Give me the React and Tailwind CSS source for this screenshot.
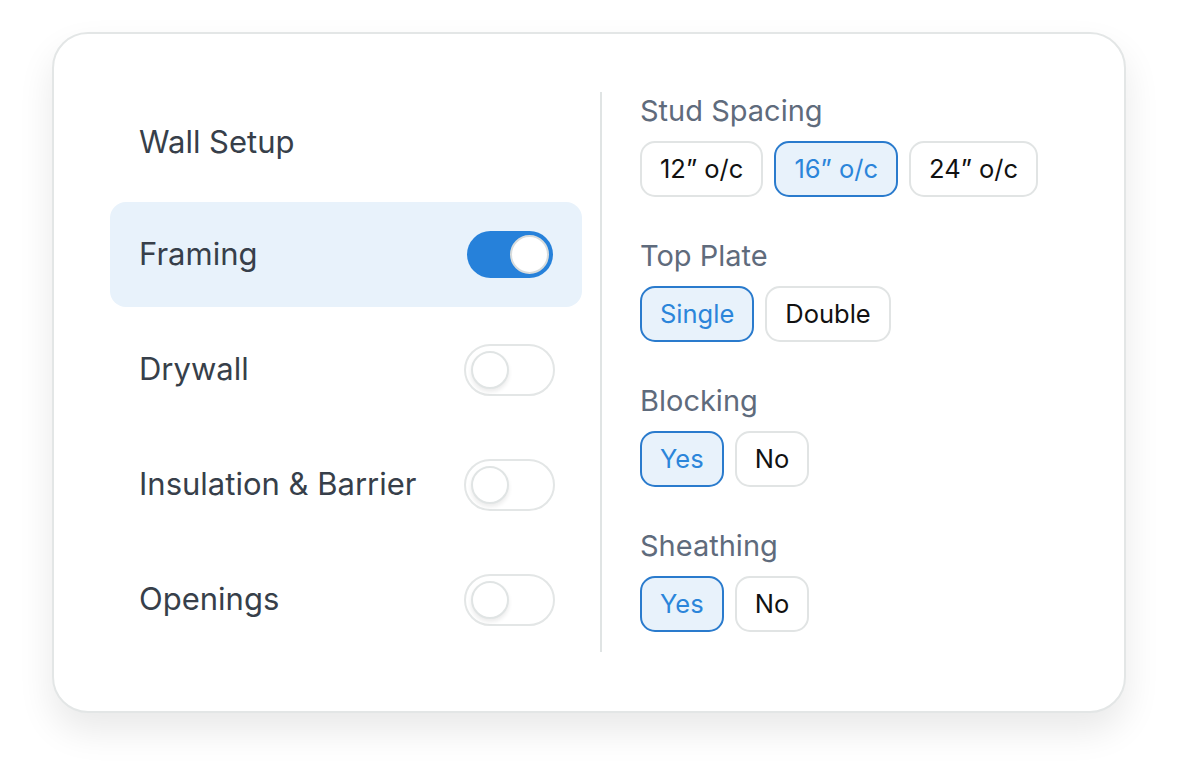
import React from 'react';

const layers = [
    { label: 'Framing', on: true },
    { label: 'Drywall', on: false },
    { label: 'Insulation & Barrier', on: false },
    { label: 'Openings', on: false },
];

const options = [
    { title: 'Stud Spacing', choices: ['12” o/c', '16” o/c', '24” o/c'], selected: 1 },
    { title: 'Top Plate', choices: ['Single', 'Double'], selected: 0 },
    { title: 'Blocking', choices: ['Yes', 'No'], selected: 0 },
    { title: 'Sheathing', choices: ['Yes', 'No'], selected: 0 },
];

function Toggle({ on }) {
    if (on) {
        return (
            <div className="w-[86px] h-[47px] rounded-full bg-[#2681da] flex items-center justify-end pr-[4px] mr-[2px]">
                <div className="w-[39px] h-[39px] rounded-full bg-white border-2 border-[#d8dcdc]" />
            </div>
        );
    }
    return (
        <div className="w-[91px] h-[52px] rounded-full bg-white border-2 border-[#e3e6e6] flex items-center pl-[5px]">
            <div className="w-[38px] h-[38px] rounded-full bg-white border-2 border-[#e0e4e4] shadow-[0_3px_4px_rgba(0,0,0,0.08)]" />
        </div>
    );
}

export default function App() {
    return (
        <div className="min-h-screen bg-white pt-[32px] pl-[52px]" style={{ fontFamily: 'Inter, "Noto Sans", sans-serif' }}>
            <div className="w-[1074px] rounded-[36px] border-2 border-[#e3e6e6] bg-white shadow-[0_18px_36px_rgba(0,0,0,0.09)] flex pl-[56px] pt-[58px] pb-[59px]">
                {/* Layers */}
                <div className="w-[472px] flex flex-col gap-[10px]">
                    <div className="h-[100px] flex items-center pl-[29px] text-[31px] text-[#373f4a]">Wall Setup</div>
                    {layers.map((layer) => (
                        <div
                            key={layer.label}
                            className={`h-[105px] rounded-[16px] flex items-center justify-between pl-[29px] pr-[27px] ${layer.on ? 'bg-[#e8f2fb]' : ''}`}
                        >
                            <span className="text-[31px] text-[#373f4a]">{layer.label}</span>
                            <Toggle on={layer.on} />
                        </div>
                    ))}
                </div>

                <div className="w-[2px] bg-[#e0e4e4] ml-[18px] mr-[38px]" />

                {/* Options */}
                <div className="flex flex-col gap-[40px]">
                    {options.map((opt) => (
                        <div key={opt.title} className="flex flex-col gap-[12px]">
                            <div className="h-[37px] flex items-center text-[29px] text-[#5f6b7c]">{opt.title}</div>
                            <div className="flex gap-[11px]">
                                {opt.choices.map((c, i) => (
                                    <div
                                        key={c}
                                        className={`h-[56px] px-[18px] rounded-[15px] border-2 flex items-center text-[25.5px] ${
                                            i === opt.selected
                                                ? 'border-[#2a7bcd] bg-[#e8f2fb] text-[#2b85da]'
                                                : 'border-[#e1e4e4] bg-white text-[#111111]'
                                        }`}
                                    >
                                        {c}
                                    </div>
                                ))}
                            </div>
                        </div>
                    ))}
                </div>
            </div>
        </div>
    );
}
